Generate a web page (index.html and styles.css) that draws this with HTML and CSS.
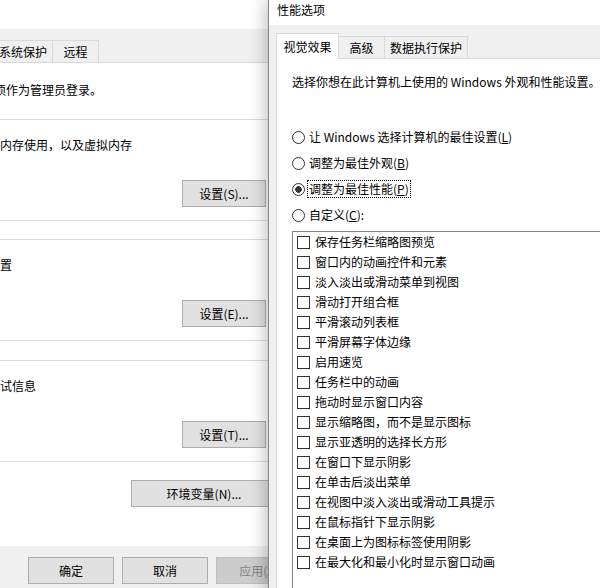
FILE: index.html
```html
<!DOCTYPE html>
<html lang="zh">
<head>
    <meta charset="UTF-8">
    <title>性能选项</title>
    <link rel="stylesheet" href="styles.css">
</head>
<body>
    <div class="desktop">
        <!-- 系统属性（被遮挡的后方窗口） -->
        <div class="win back">
            <div class="back-title">系统属性</div>
            <div class="back-tabs">
                <div class="tab" style="width: 56px">计算机名</div>
                <div class="tab" style="width: 44px">硬件</div>
                <div class="tab" style="width: 46px">高级</div>
                <div class="tab" style="width: 60px">系统保护</div>
                <div class="tab" style="width: 47px">远程</div>
            </div>
            <div class="back-panel">
                <p class="intro">要进行大多数更改，你必须作为管理员登录。</p>

                <div class="group">
                    <p>视觉效果，处理器计划，内存使用，以及虚拟内存</p>
                    <div class="group-actions">
                        <button class="btn">设置(S)...</button>
                    </div>
                </div>

                <div class="group">
                    <p>与登录帐户相关的桌面设置</p>
                    <div class="group-actions">
                        <button class="btn">设置(E)...</button>
                    </div>
                </div>

                <div class="group group-last">
                    <p>系统启动、系统故障和调试信息</p>
                    <div class="group-actions">
                        <button class="btn">设置(T)...</button>
                    </div>
                </div>

                <div class="env-row">
                    <button class="btn btn-wide">环境变量(N)...</button>
                </div>
            </div>
            <div class="back-footer">
                <button class="btn">确定</button>
                <button class="btn">取消</button>
                <button class="btn btn-disabled">应用(A)</button>
            </div>
        </div>

        <!-- 性能选项（前方窗口） -->
        <div class="win front">
            <div class="front-title">性能选项</div>
            <div class="front-body">
                <div class="front-tabs">
                    <div class="ftab ftab-active" style="width: 63px">视觉效果</div>
                    <div class="ftab" style="width: 47px">高级</div>
                    <div class="ftab" style="width: 84px">数据执行保护</div>
                </div>
                <div class="front-panel">
                    <p class="intro">选择你想在此计算机上使用的 Windows 外观和性能设置。</p>

                    <div class="radios">
                        <div class="radio-row"><span class="radio"></span><span class="label">让 Windows 选择计算机的最佳设置(<u>L</u>)</span></div>
                        <div class="radio-row"><span class="radio"></span><span class="label">调整为最佳外观(<u>B</u>)</span></div>
                        <div class="radio-row"><span class="radio radio-on"></span><span class="label label-focus">调整为最佳性能(<u>P</u>)</span></div>
                        <div class="radio-row"><span class="radio"></span><span class="label">自定义(<u>C</u>):</span></div>
                    </div>

                    <div class="listbox">
                        <div class="check-row"><span class="check"></span>保存任务栏缩略图预览</div>
                        <div class="check-row"><span class="check"></span>窗口内的动画控件和元素</div>
                        <div class="check-row"><span class="check"></span>淡入淡出或滑动菜单到视图</div>
                        <div class="check-row"><span class="check"></span>滑动打开组合框</div>
                        <div class="check-row"><span class="check"></span>平滑滚动列表框</div>
                        <div class="check-row"><span class="check"></span>平滑屏幕字体边缘</div>
                        <div class="check-row"><span class="check"></span>启用速览</div>
                        <div class="check-row"><span class="check"></span>任务栏中的动画</div>
                        <div class="check-row"><span class="check"></span>拖动时显示窗口内容</div>
                        <div class="check-row"><span class="check"></span>显示缩略图，而不是显示图标</div>
                        <div class="check-row"><span class="check"></span>显示亚透明的选择长方形</div>
                        <div class="check-row"><span class="check"></span>在窗口下显示阴影</div>
                        <div class="check-row"><span class="check"></span>在单击后淡出菜单</div>
                        <div class="check-row"><span class="check"></span>在视图中淡入淡出或滑动工具提示</div>
                        <div class="check-row"><span class="check"></span>在鼠标指针下显示阴影</div>
                        <div class="check-row"><span class="check"></span>在桌面上为图标标签使用阴影</div>
                        <div class="check-row"><span class="check"></span>在最大化和最小化时显示窗口动画</div>
                    </div>
                </div>
            </div>
        </div>
    </div>
</body>
</html>
```

FILE: styles.css
```css
* {
    box-sizing: border-box;
}
body {
    margin: 0;
    padding: 0;
    font-family: "Noto Sans CJK SC", "Liberation Sans", sans-serif;
    font-size: 12px;
    line-height: 16px;
    color: #000;
    background: #fff;
}
p {
    margin: 0;
}
.desktop {
    position: relative;
    width: 600px;
    height: 588px;
    overflow: hidden;
}
.win {
    position: absolute;
    top: 0;
}

/* 后方窗口 */
.back {
    left: -150px;
    width: 460px;
    height: 588px;
    background: #f0f0f0;
}
.back-title {
    height: 29px;
    background: #fff;
    padding-left: 10px;
    line-height: 29px;
}
.back-tabs {
    height: 33px;
    display: flex;
    align-items: flex-end;
}
.tab {
    height: 22px;
    border: 1px solid #d9d9d9;
    border-bottom: none;
    margin-right: -1px;
    text-align: center;
    line-height: 21px;
    background: #f0f0f0;
}
.back-panel {
    height: 484px;
    background: #fff;
    border-top: 1px solid #d9d9d9;
    padding-top: 19px;
}
.back-panel .intro {
    padding-left: 12px;
}
.group {
    margin: 21px 32px 0 10px;
    border: 1px solid #dcdcdc;
    padding: 17px 11px 13px 7px;
}
.group + .group {
    margin-top: 18px;
}
.group-last {
    margin-top: 19px !important;
}
.group-actions {
    display: flex;
    justify-content: flex-end;
    margin-top: 27px;
}
.btn {
    width: 84px;
    height: 27px;
    padding: 0;
    font-family: inherit;
    font-size: 12px;
    color: #000;
    background: #e1e1e1;
    border: 1px solid #adadad;
}
.btn-wide {
    width: 146px;
}
.btn-disabled {
    color: #838383;
    background: #cccccc;
    border-color: #bfbfbf;
}
.env-row {
    display: flex;
    justify-content: flex-end;
    margin: 18px 33px 0 0;
}
.back-footer {
    height: 42px;
    display: flex;
    justify-content: flex-end;
    gap: 8px;
    padding: 11px 8px 0 0;
}
.back-footer .btn {
    width: 86px;
}

/* 前方窗口 */
.front {
    left: 268px;
    width: 345px;
    height: 600px;
    background: #f0f0f0;
    border-left: 1px solid #858585;
    box-shadow: 0 0 18px rgba(0, 0, 0, 0.32);
}
.front-title {
    height: 25px;
    background: #fff;
    padding-left: 8px;
    line-height: 20px;
}
.front-body {
    padding: 8px 0 0 7px;
}
.front-tabs {
    height: 25px;
    display: flex;
    align-items: flex-end;
    position: relative;
    z-index: 1;
}
.ftab {
    height: 22px;
    border: 1px solid #d9d9d9;
    border-bottom: none;
    margin-left: -1px;
    text-align: center;
    line-height: 22px;
    background: #f0f0f0;
}
.ftab-active {
    height: 26px;
    margin: 0 0 -1px 0;
    background: #fff;
    line-height: 25px;
}
.front-panel {
    height: 540px;
    background: #fff;
    border: 1px solid #d9d9d9;
    border-right: none;
    padding: 15px 0 0 15px;
}
.radios {
    margin-top: 39px;
    display: flex;
    flex-direction: column;
    gap: 10px;
}
.radio-row {
    display: flex;
    align-items: center;
    height: 16px;
}
.radio {
    width: 13px;
    height: 13px;
    border: 1px solid #333;
    border-radius: 50%;
    margin-right: 3px;
    flex-shrink: 0;
}
.radio-on {
    background: radial-gradient(circle, #333 3px, transparent 3.6px);
}
.label {
    padding: 0 1px;
}
.label-focus {
    outline: 1px dotted #000;
}
.listbox {
    margin-top: 8px;
    width: 340px;
    height: 400px;
    border: 1px solid #828282;
    padding-left: 4px;
}
.check-row {
    display: flex;
    align-items: center;
    height: 20px;
    white-space: nowrap;
}
.check {
    width: 13px;
    height: 13px;
    border: 1px solid #333;
    margin-right: 5px;
    flex-shrink: 0;
}
```
